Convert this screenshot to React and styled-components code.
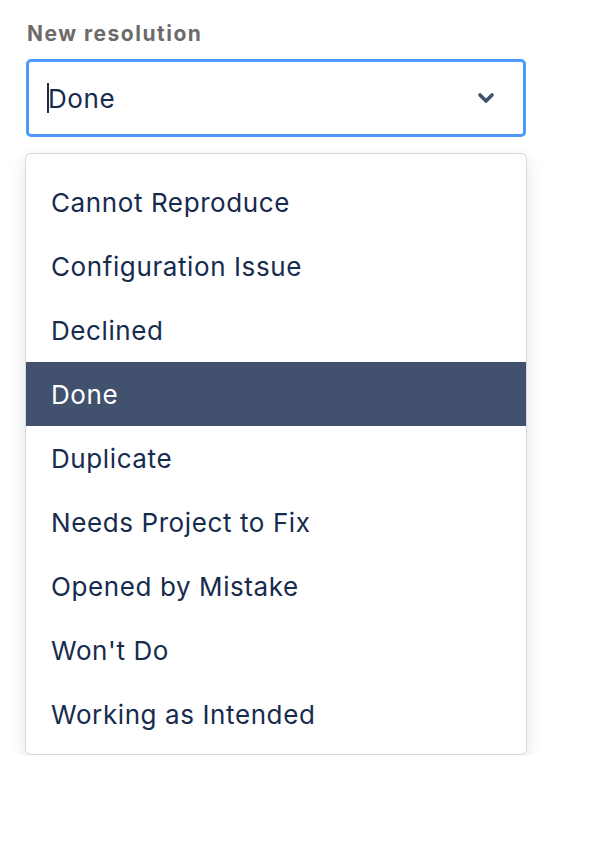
import React from 'react'
import styled, { createGlobalStyle } from 'styled-components'

const OPTIONS = [
  'Cannot Reproduce',
  'Configuration Issue',
  'Declined',
  'Done',
  'Duplicate',
  'Needs Project to Fix',
  'Opened by Mistake',
  "Won't Do",
  'Working as Intended',
]

const GlobalStyle = createGlobalStyle`
  html, body {
    margin: 0;
    background: #fff;
    font-family: Inter, "Noto Sans", "Liberation Sans", sans-serif;
  }
`

export default function App() {
  const selected = 'Done'
  return (
    <Wrapper>
      <GlobalStyle />
      <Label>New resolution</Label>
      <Control>
        <Value>
          <Caret />
          {selected}
        </Value>
        <Chevron viewBox="0 0 20 20">
          <path
            d="M4 7 L10 13 L16 7"
            fill="none"
            stroke="#42526e"
            strokeWidth="3.6"
            strokeLinecap="round"
            strokeLinejoin="round"
          />
        </Chevron>
      </Control>
      <Menu>
        {OPTIONS.map((x) => (
          <Option key={x} active={x === selected}>
            {x}
          </Option>
        ))}
      </Menu>
    </Wrapper>
  )
}

const Wrapper = styled.div`
  width: 502px;
  padding: 20px 0 0 25px;
`

const Label = styled.div`
  padding-left: 2px;
  font-size: 21px;
  font-weight: 700;
  letter-spacing: 1.5px;
  line-height: 28px;
  color: #6b6b6b;
  margin-bottom: 11px;
`

const Control = styled.div`
  box-sizing: border-box;
  margin-left: 1px;
  width: 500px;
  height: 78px;
  border: 3px solid #4c9aff;
  border-radius: 5px;
  display: flex;
  align-items: center;
  justify-content: space-between;
  padding: 0 27px 0 18px;
  background: #fff;
`

const Value = styled.div`
  display: flex;
  align-items: center;
  font-size: 26px;
  letter-spacing: 0.6px;
  color: #172b4d;
`

const Caret = styled.span`
  display: inline-block;
  width: 2px;
  height: 30px;
  background: #172b4d;
  margin-right: -1px;
`

const Chevron = styled.svg`
  width: 20px;
  height: 20px;
`

const Menu = styled.div`
  box-sizing: border-box;
  margin-top: 16px;
  width: 502px;
  border: 1px solid #d8d8d8;
  border-radius: 6px;
  background: #fff;
  padding: 16px 0 8px;
  box-shadow: 0 6px 16px rgba(9, 30, 66, 0.12);
`

const Option = styled.div`
  height: 64px;
  display: flex;
  align-items: center;
  padding-left: 25px;
  font-size: 26px;
  letter-spacing: 0.6px;
  color: ${(p) => (p.active ? '#fff' : '#172b4d')};
  background: ${(p) => (p.active ? '#42526e' : 'transparent')};
`
